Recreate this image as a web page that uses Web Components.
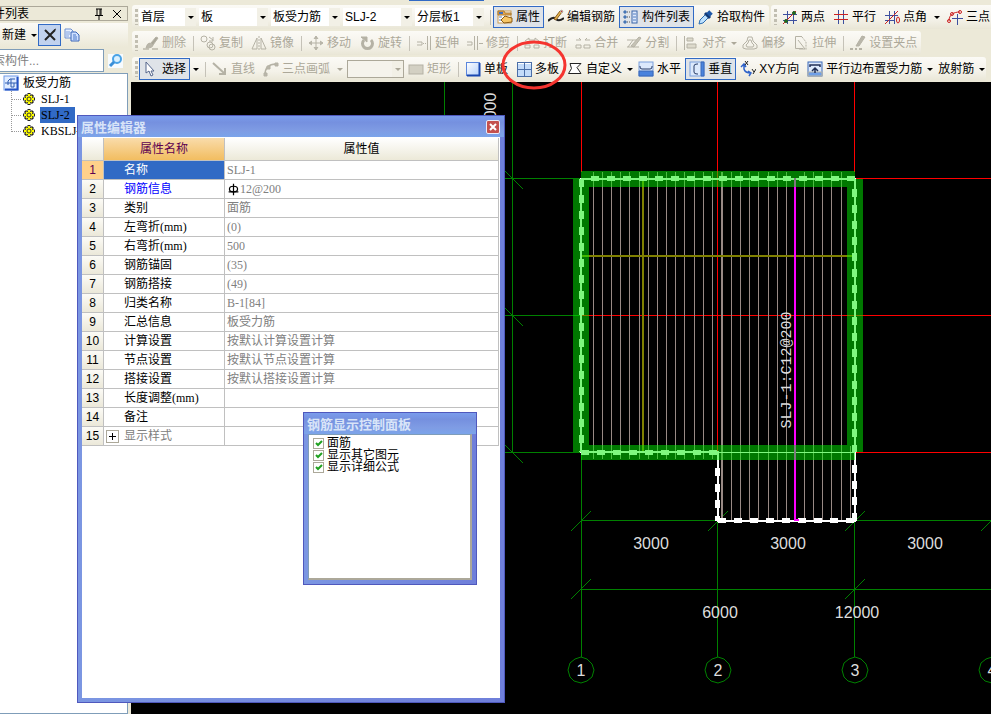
<!DOCTYPE html>
<html lang="zh-CN">
<head>
<meta charset="utf-8">
<title>板受力筋</title>
<style>
html, body {
  height: 100%;
}
body {
  margin: 0;
  overflow: hidden;
  background: #ece9d8;
  color: #000;
  font: 12px/16px "Liberation Sans", "Noto Sans CJK SC", sans-serif;
}
</style>
</head>
<body>
<rebar-app></rebar-app>

<script>
const icons = {
  clear: '<path d="M3 3l10 10M13 3L3 13" stroke="#222" stroke-width="2"/><path d="M12 3l2-1" stroke="#222"/>',
  copies: '<path d="M1 2h6l2 2v7H1z" fill="#e8f0ff" stroke="#6d8fd0"/><path d="M2 5h4M2 7h4M2 9h3" stroke="#7fa0dd"/><path d="M7 5h5l3 3v6H7z" fill="#cfe0ff" stroke="#3b66b8"/><path d="M9 8h3M9 10h4M9 12h4" stroke="#4a78c8"/>',
  search: '<rect x="0" y="1" width="15" height="14" fill="#f6fbff" stroke="none"/><circle cx="9" cy="6" r="4" fill="#d9f0ff" stroke="#4aa3e6" stroke-width="2"/><path d="M6 9l-4 4" stroke="#3a8fd8" stroke-width="3"/>',
  slab: '<rect x="1" y="1" width="14" height="14" fill="#e0ecff" stroke="#6f9ae8"/><path d="M14.500 2v12.500H2" stroke="#2452c4" stroke-width="2"/><path d="M2 8h4M5 10V6l2-2h5M8 4v8h3V8h3M6 8h5" stroke="#2f5cb0"/>',
  gear: '<path d="M8 2v12M2 8h12M4 4l8 8M12 4l-8 8" stroke="#222" stroke-width="3"/><path d="M8 3v10M3 8h10M5 5l6 6M11 5l-6 6" stroke="#ff0" stroke-width="2"/><circle cx="8" cy="8" r="3" fill="#ff0" stroke="#ff0"/><circle cx="8" cy="8" r="2" stroke="#333"/>',
  props: '<rect x="1" y="2" width="13" height="12" fill="#fff" stroke="#c99a4f"/><path d="M1 2h6l1 2h6v2H1z" fill="#e9a64a" stroke="#a87a35"/><path d="M2 4h4" stroke="#3f6fc0" stroke-width="2"/><path d="M2 8h3M2 11h3" stroke="#5b84c4"/><path d="M4 11l4-4 3 1 4 1v4l-8 1z" fill="#f6c667" stroke="#8b5a14"/>',
  edit: '<path d="M0 12q5-5 8-2t8-1" stroke="#222" stroke-width="2"/><path d="M6 10l6-8 2 1-6 8z" fill="#e5b44d" stroke="#8a5b1c"/><path d="M12 2l1-1 2 1-1 2z" fill="#c33"/>',
  list: '<path d="M1 2h2v2H1zM1 7h2v2H1zM1 12h2v2H1z" fill="#7fa3dc" stroke="#36a"/><path d="M4 3h4M4 8h4M4 13h4" stroke="#555" stroke-dasharray="1 1"/><rect x="9" y="2" width="5" height="12" fill="#dfe9fb" stroke="#3a66a8"/><path d="M10 5h3M10 8h3M10 11h3" stroke="#4d7cc0"/>',
  pick: '<path d="M1 15l1-4 6-6 3 3-6 6z" fill="#bfe2ff" stroke="#2b6cb0"/><path d="M7 4l5 5" stroke="#133a75" stroke-width="3"/><path d="M10 6l3-3" stroke="#1e58a8" stroke-width="5"/>',
  twopt: '<path d="M5.500 2v13M11.500 2v13M1 5.500h14M1 11.500h14" stroke="#3d4f9f"/><path d="M1 15L14 2" stroke="#c22"/><circle cx="4" cy="12" r="1.500" fill="#262" stroke="#262"/><circle cx="12" cy="4" r="1.500" fill="#262" stroke="#262"/>',
  parallel: '<path d="M5.500 1v14M10.500 1v14" stroke="#3d4f9f"/><path d="M1 5.500h14M1 10.500h14" stroke="#c22"/>',
  ptangle: '<path d="M5.500 2v13M10.500 2v13M1 6.500h13M1 11.500h10" stroke="#3d4f9f"/><path d="M1 15L14 2" stroke="#c22"/><ellipse cx="14" cy="11" rx="1.500" ry="3" stroke="#c22"/>',
  threept: '<path d="M2 12C2 6 6 3 13 3" stroke="#c22"/><circle cx="2" cy="12" r="1.500" stroke="#c22"/><circle cx="5" cy="5" r="1.500" stroke="#c22"/><circle cx="13" cy="3" r="1.500" stroke="#c22"/><path d="M5 9.500h11M10.500 5v11" stroke="#3d4f9f"/>',
  brush: '<path d="M0 14h6M9 14h6" stroke="#c8c5b8" stroke-width="2"/><path d="M3 13q1-5 4-5l3 2q0 3-7 3z" fill="#b9b6aa"/><path d="M8 8l5-6 2 1-5 7z" fill="#a9a699"/>',
  copy: '<circle cx="4" cy="4" r="3"/><circle cx="12" cy="12" r="3"/><circle cx="10" cy="10" r="3"/><path d="M9 2l4 3M13 2v4H9"/>',
  mirror: '<path d="M6 3v11H1zM10 3v11h5z"/><path d="M8 1v14" stroke-dasharray="2 1"/>',
  move: '<path d="M8 2v12M2 8h12"/><path d="M6 4l2-3 2 3M6 12l2 3 2-3M4 6L1 8l3 2M12 6l3 2-3 2" fill="#b9b6aa"/>',
  rotate: '<path d="M5 5a5 5 0 1 0 7 0" stroke-width="3"/><path d="M2 2h6v5z" fill="#b5b2a5"/>',
  extend: '<path d="M1 7h5v3H1M11.500 1v14M14.500 1v14"/><path d="M7 8.500h4" stroke-dasharray="1 1"/>',
  trim: '<path d="M0 7h5v3H0M7.500 1v14M10.500 1v14M12 8.500h4"/>',
  split: '<path d="M1 13h5v-3H1zM10 13h5v-3h-5zM1 6l4-3v2h3M15 6l-4-3v2H8"/>',
  merge: '<path d="M1 13h5v-3H1zM9 13h6v-3H9zM1 5h5L4 3M15 5h-5l2-2"/>',
  divide: '<path d="M1 5h10M1 12h12M2 12l5-7"/><path d="M5 11l8-9 2 1-7 9z" fill="#c5c2b5"/>',
  align: '<path d="M1.500 1v14"/><path d="M4 3h6v3H4zM4 9h9v4H4z" fill="#dddacc"/>',
  offset: '<path d="M6 2h4l1 4 4 4v3l-3 1H4l-3-1v-3l4-4z"/><path d="M7 5h2l1 3 2 2-1 2H5l-1-2 2-2z"/>',
  stretch: '<path d="M9 1.500H2.500v12H10M5 5l7 9H6"/><path d="M9 2l4 5v8" stroke-dasharray="2 1"/>',
  grip: '<path d="M0 14h3M5 14h2M9 14h3" stroke-width="2"/><path d="M6 11l6-10 3 1-6 9z" fill="#b9b6aa"/>',
  cursor: '<path d="M3 1v11l3-2 2 5 2-1-2-4h3z" fill="#fff" stroke="#55668c"/>',
  line: '<path d="M1 2l11 10M13 7v6H7" stroke-width="2"/>',
  arc: '<path d="M2 14C2 7 5 3 13 3" stroke-width="1.500"/><path d="M1 12h3v3H1zM4 5h3v3H4zM12 2h3v3h-3z" fill="#b9b6aa"/>',
  rect: '<rect x="1" y="4" width="14" height="9" fill="#d3d0c3"/>',
  single: '<defs><linearGradient id="s" x2="1" y2="1"><stop stop-color="#fff"/><stop offset="1" stop-color="#b4d0fa"/></linearGradient></defs><rect x="1.500" y="1.500" width="13" height="13" fill="url(#s)" stroke="#5b86dc"/><path d="M14.500 2v12.500H2" stroke="#1947b0" stroke-width="2"/>',
  multi: '<rect x="1.500" y="1.500" width="14" height="14" fill="#c4dcfa" stroke="#4a6ea8"/><path d="M8.500 1v15M1 8.500h15" stroke="#4a6ea8"/><path d="M2 2.500h6M9 2.500h6" stroke="#fff"/>',
  custom: '<path d="M3 2.500h11l-4 4 4 6H1.500l3-5z" fill="#fff" stroke="#222"/>',
  horiz: '<rect x="1" y="1" width="14" height="14" fill="#dce9fc" stroke="#7b9fdc"/><path d="M1 10h14v5H1z" fill="#4a83dd" stroke="#3a68b8"/><path d="M2 5v1q0 2 2 2h8q2 0 2-2V5" stroke="#273b66"/>',
  vert: '<rect x="1" y="1" width="14" height="14" fill="#dce9fc" stroke="#7b9fdc"/><path d="M12 1h3v14h-3z" fill="#4a83dd" stroke="#3a68b8"/><path d="M9 3H8Q5 3 5 5v6q0 2 3 2h1" stroke="#273b66"/>',
  xy: '<path d="M4 3v5q1 4 7 4M1 6l3-3 2 3M8 10l3 2-2 3" stroke="#2e62c9" stroke-width="1.500"/><path d="M5 0l3 4M8 0L5 4M12 8l2 3M16 8l-3 5" stroke="#222"/>',
  edge: '<rect x="1" y="1" width="14" height="14" fill="#dce9fc" stroke="#3a68b8"/><path d="M1 11h14v4H1z" fill="#6f9fe8"/><path d="M3 6V4h10v2M8 12V8M5 10l3-3 3 3" stroke="#1f2e55" stroke-width="1.500"/>',
  rebar: '<path d="M8 1v14M2 11h12" stroke="#000" stroke-width="1.500"/><ellipse cx="8" cy="7.500" rx="5" ry="3.500" stroke="#000" stroke-width="1.500"/>',
  pin: '<path d="M5 3h6M6 3v6M9 3v6M10 3v6M4 9.500h8M8 10v4" stroke="#000"/>',
  close: '<path d="M4 4l8 8M12 4l-8 8" stroke="#000"/>',
}

class ShadowElement extends HTMLElement {
  constructor() {
    super()

    const template = document.createElement('template')
    template.innerHTML = this.constructor.markup
    this.attachShadow({ mode: 'open' })
    this.shadowRoot.append(template.content.cloneNode(true))
  }

  $(selector) {
    return this.shadowRoot.querySelector(selector)
  }
}

class UiIcon extends ShadowElement {
  static observedAttributes = ['name']

  static markup = `
<style>
:host {
  display: block;
  flex: none;
  width: 16px;
  height: 16px;
}
svg {
  display: block;
  width: 100%;
  height: 100%;
}
</style>
<svg viewBox="0 0 16 16" fill="none" stroke="#b5b2a5" aria-hidden="true"></svg>
`

  attributeChangedCallback() {
    this.$('svg').innerHTML = icons[this.getAttribute('name')] || ''
  }
}
customElements.define('ui-icon', UiIcon)

class ToolBar extends ShadowElement {
  static markup = `
<style>
:host {
  display: flex;
  flex: none;
  align-items: center;
  height: 24px;
  border-radius: 3px;
  background: linear-gradient(#fbfaf6, #f4f2e9 60%, #e9e6d6);
}
.grip {
  width: 3px;
  height: 16px;
  margin: 0 1px 0 3px;
  background: repeating-linear-gradient(#c1beb1 0 3px, transparent 3px 5px);
}
</style>
<span class="grip"></span>
<slot></slot>
`
}
customElements.define('tool-bar', ToolBar)

class ToolSeparator extends ShadowElement {
  static markup = `
<style>
:host {
  flex: none;
  width: 1px;
  height: 15px;
  margin: 0 2px 0 3px;
  background: #c5c2b8;
}
</style>
`
}
customElements.define('tool-separator', ToolSeparator)

class ToolButton extends ShadowElement {
  static markup = `
<style>
:host {
  display: flex;
  flex: none;
  align-items: center;
}
button {
  display: flex;
  align-items: center;
  gap: 3px;
  height: 22px;
  box-sizing: border-box;
  padding: 0 3px;
  border: 1px solid transparent;
  background: none;
  color: inherit;
  font: inherit;
  white-space: nowrap;
}
:host([active]) button {
  border-color: #316ac5;
  background: #dfe3e8;
}
:host([disabled]) {
  color: #aca899;
}
.arrow {
  display: none;
  width: 12px;
}
.arrow::before {
  content: "";
  display: block;
  width: 0;
  margin: 0 auto;
  border: 3px solid transparent;
  border-top-color: currentColor;
  border-bottom: 0;
}
:host([menu]) .arrow {
  display: block;
}
:host([menu=inline]) .arrow {
  width: 8px;
}
</style>
<button type="button"><ui-icon></ui-icon><slot></slot></button>
<span class="arrow"></span>
`

  connectedCallback() {
    const icon = this.getAttribute('icon')

    if (icon) this.$('ui-icon').setAttribute('name', icon)
    else this.$('ui-icon').remove()
    this.$('button').disabled = this.hasAttribute('disabled')
  }
}
customElements.define('tool-button', ToolButton)

class ToolCombo extends ShadowElement {
  static markup = `
<style>
:host {
  display: grid;
  flex: none;
  width: 69px;
  height: 18px;
  margin-right: 3px;
  background: #fff;
}
:host([short]) {
  width: 57px;
}
select, .arrow {
  grid-area: 1 / 1;
}
select {
  appearance: none;
  width: 100%;
  padding: 0 12px 0 2px;
  border: 0;
  background: none;
  color: inherit;
  font: inherit;
}
.arrow {
  justify-self: end;
  align-self: stretch;
  display: flex;
  align-items: center;
  width: 11px;
  background: #f2f0e6;
  pointer-events: none;
}
.arrow::before {
  content: "";
  margin: auto;
  border: 3px solid transparent;
  border-top-color: #000;
  border-bottom: 0;
}
:host([disabled]) {
  box-sizing: border-box;
  width: 57px;
  margin: 0 0 0 1px;
  border: 1px solid #aca899;
  background: #f5f3ec;
}
:host([disabled]) .arrow::before {
  border-top-color: #aca899;
}
</style>
<select><option></option></select>
<span class="arrow"></span>
`

  connectedCallback() {
    this.$('option').textContent = this.getAttribute('value')
    this.$('select').setAttribute('aria-label', this.getAttribute('label'))
    this.$('select').disabled = this.hasAttribute('disabled')
  }
}
customElements.define('tool-combo', ToolCombo)

class ComponentPanel extends ShadowElement {
  static markup = `
<style>
:host {
  display: flex;
  flex-direction: column;
  margin-left: -8px;
  padding-top: 6px;
  background: #ece9d8;
}
header {
  display: flex;
  align-items: center;
  height: 13px;
  border: 1px solid #aca899;
  margin-bottom: 2px;
}
h2 {
  flex: 1;
  margin: 0;
  font: inherit;
}
header button, .tools button {
  display: flex;
  padding: 0;
  border: 0;
  background: none;
}
header button {
  margin-right: 2px;
}
.tools {
  display: flex;
  align-items: center;
  height: 24px;
  padding-left: 6px;
  background: linear-gradient(#fbfaf6, #ece9d8);
}
.tools .clear {
  align-items: center;
  justify-content: center;
  width: 23px;
  height: 22px;
  box-sizing: border-box;
  border: 1px solid #316ac5;
  background: #c1d2ee;
  margin-right: 3px;
}
.search {
  display: flex;
  align-items: center;
  gap: 4px;
  margin: 2px 0 1px;
}
input {
  flex: 1;
  min-width: 0;
  height: 23px;
  box-sizing: border-box;
  padding: 0;
  border: 1px solid #7f9db9;
  background: #fff;
  font: inherit;
}
input::placeholder {
  color: #808080;
}
.search button {
  width: 20px;
  padding: 0;
  border: 0;
  background: none;
}
ul {
  margin: 0;
  padding: 0;
  list-style: none;
}
.tree {
  flex: 1;
  padding: 1px 0 0 10px;
  border: 1px solid #7f9db9;
  background: #fff;
  overflow: hidden;
}
.root, li li {
  display: flex;
  align-items: center;
  height: 16px;
}
.root {
  gap: 4px;
}
li ul {
  margin-left: 8px;
  height: 41px;
  border-left: 1px dotted #999;
}
li li {
  font-family: "Liberation Serif", serif;
}
li li::before {
  content: "";
  width: 9px;
  border-top: 1px dotted #999;
}
li li ui-icon {
  margin-right: 3px;
}
li li span {
  min-width: 33px;
  padding: 0 1px;
  white-space: nowrap;
}
.selected {
  background: #316ac5;
}
</style>
<header>
  <h2>件列表</h2>
  <button type="button" aria-label="pin"><ui-icon name="pin"></ui-icon></button>
  <button type="button" aria-label="close"><ui-icon name="close"></ui-icon></button>
</header>
<div class="tools">
  <tool-button menu="inline">新建</tool-button>
  <button class="clear" type="button" aria-label="delete"><ui-icon name="clear"></ui-icon></button>
  <button type="button" aria-label="copy"><ui-icon name="copies"></ui-icon></button>
</div>
<div class="search">
  <input type="text" placeholder="索构件..." aria-label="search">
  <button type="button" aria-label="search"><ui-icon name="search"></ui-icon></button>
</div>
<ul class="tree">
  <li>
    <div class="root"><ui-icon name="slab"></ui-icon><span>板受力筋</span></div>
    <ul>
      <li><ui-icon name="gear"></ui-icon><span>SLJ-1</span></li>
      <li><ui-icon name="gear"></ui-icon><span class="selected">SLJ-2</span></li>
      <li><ui-icon name="gear"></ui-icon><span>KBSLJ-</span></li>
    </ul>
  </li>
</ul>
`
}
customElements.define('component-panel', ComponentPanel)

class ToolWindow extends ShadowElement {
  static markup = `
<style>
:host {
  display: flex;
  flex-direction: column;
  box-sizing: border-box;
  padding: 0 4px 4px;
  border: 1px solid #4f58bd;
  background: linear-gradient(90deg, #7b96e2, #6f7fda);
}
header {
  display: flex;
  align-items: center;
  flex: none;
  height: 21px;
  margin: 0 -4px;
  padding: 0 4px 0 3px;
  background: linear-gradient(#7a9cec, #7590df 30%, #7f9ce4 70%, #7ba4ea);
}
h2 {
  flex: 1;
  margin: 0;
  color: #d8e4f8;
  font: bold 13px/16px "Noto Sans CJK SC", sans-serif;
}
button {
  display: none;
  width: 14px;
  height: 14px;
  padding: 0;
  border: 1px solid #e8ecfa;
  border-radius: 2px;
  background: #c4504e;
}
button svg {
  display: block;
}
:host([closable]) button {
  display: block;
}
.body {
  flex: 1;
  min-height: 0;
  overflow: hidden;
  background: #fff;
}
</style>
<header>
  <h2></h2>
  <button type="button" aria-label="close">
    <svg width="12" height="12" viewBox="0 0 12 12" stroke="#fff" stroke-width="2"><path d="M3 3l6 6M9 3l-6 6"/></svg>
  </button>
</header>
<div class="body"><slot></slot></div>
`

  connectedCallback() {
    this.$('h2').textContent = this.getAttribute('caption')
  }
}
customElements.define('tool-window', ToolWindow)

const properties = [
  ['名称', 'SLJ-1'],
  ['钢筋信息', '12@200'],
  ['类别', '面筋'],
  ['左弯折(mm)', '(0)'],
  ['右弯折(mm)', '500'],
  ['钢筋锚固', '(35)'],
  ['钢筋搭接', '(49)'],
  ['归类名称', 'B-1[84]'],
  ['汇总信息', '板受力筋'],
  ['计算设置', '按默认计算设置计算'],
  ['节点设置', '按默认节点设置计算'],
  ['搭接设置', '按默认搭接设置计算'],
  ['长度调整(mm)', ''],
  ['备注', ''],
  ['显示样式', ''],
]

class PropertyGrid extends ShadowElement {
  static markup = `
<style>
:host {
  display: block;
  padding: 1px 1px 0 0;
  font-family: "Liberation Serif", "Noto Sans CJK SC", serif;
}
table {
  width: 100%;
  border-collapse: separate;
  border-spacing: 0;
  table-layout: fixed;
}
.no {
  width: 22px;
}
.name {
  width: 121px;
}
th, td {
  height: 19px;
  box-sizing: border-box;
  padding: 0;
  border: solid #c0c0c0;
  border-width: 0 1px 1px 0;
  font-weight: normal;
}
thead th {
  height: 23px;
  background: linear-gradient(#fff, #ece9d8);
}
thead .name {
  background: linear-gradient(#f9dcab, #f2bd60);
  color: #5c0050;
}
tbody th {
  background: linear-gradient(#fcfbf6, #ebe8d9);
  font-family: "Liberation Sans", sans-serif;
}
tbody td div {
  display: flex;
  align-items: center;
  height: 18px;
  line-height: 18px;
}
td + td div {
  padding-left: 2px;
  color: #808080;
}
.lead {
  display: flex;
  width: 18px;
  padding-left: 2px;
}
button {
  width: 13px;
  height: 13px;
  padding: 0;
  border: 1px solid #aca899;
  background: #fff;
}
button svg {
  display: block;
}
.current th {
  background: #ffd08a;
  color: #5c0050;
}
.current td:nth-child(2) {
  background: #316ac5;
  color: #fff;
}
.key td:nth-child(2) {
  color: #00f;
}
.group td {
  color: #808080;
}
td ui-icon {
  width: 13px;
  height: 13px;
}
</style>
<table>
  <thead>
    <tr><th class="no"></th><th class="name">属性名称</th><th>属性值</th></tr>
  </thead>
  <tbody></tbody>
</table>
`

  connectedCallback() {
    const classes = { 0: 'current', 1: 'key', 14: 'group' }
    const expander = `<button type="button" aria-label="expand">
<svg width="11" height="11" viewBox="0 0 11 11" stroke="#000"><path d="M2 5.500h7M5.500 2v7"/></svg></button>`

    this.$('tbody').innerHTML = properties.map(([name, value], i) => `
<tr class="${classes[i] || ''}">
  <th>${i + 1}</th>
  <td><div><span class="lead">${i === 14 ? expander : ''}</span>${name}</div></td>
  <td><div>${i === 1 ? '<ui-icon name="rebar"></ui-icon>' : ''}${value}</div></td>
</tr>`).join('')
  }
}
customElements.define('property-grid', PropertyGrid)

class DisplayOptions extends ShadowElement {
  static markup = `
<style>
:host {
  display: block;
  height: 100%;
  box-sizing: border-box;
  padding: 2px 4px;
  border: solid #7f9db9;
  border-width: 1px 2px 2px 1px;
  border-right-color: #aca899;
  border-bottom-color: #aca899;
  line-height: 12px;
}
label {
  display: flex;
  align-items: center;
  gap: 3px;
  height: 12px;
}
input {
  appearance: none;
  width: 11px;
  height: 11px;
  box-sizing: border-box;
  margin: 0;
  border: 1px solid #aca899;
  background: #fff;
}
.box {
  display: grid;
}
.box > * {
  grid-area: 1 / 1;
}
svg {
  pointer-events: none;
}
input:not(:checked) + svg {
  display: none;
}
</style>
`

  connectedCallback() {
    for (const text of ['面筋', '显示其它图元', '显示详细公式']) {
      const label = document.createElement('label')
      label.innerHTML = `<span class="box"><input type="checkbox" checked>
<svg width="11" height="11" viewBox="0 0 11 11" fill="none" stroke="#21a121" stroke-width="2"><path d="M3 5l2 2 4-4"/></svg></span><span>${text}</span>`
      this.shadowRoot.append(label)
    }
  }
}
customElements.define('display-options', DisplayOptions)

const bars = [
  593, 602, 611, 620, 629, 639, 648, 657, 666, 675, 684, 694, 703, 712,
  731, 740, 749, 758, 768, 777, 786, 804, 813, 822, 831, 841,
]

class CadView extends ShadowElement {
  static markup = `
<style>
:host {
  display: block;
  background: #000;
  overflow: hidden;
}
svg {
  display: block;
  width: 100%;
  height: 100%;
}
.crisp {
  shape-rendering: crispEdges;
}
text {
  fill: #ddd;
  stroke: none;
  font: 16px "Liberation Sans", sans-serif;
  text-anchor: middle;
}
.tag {
  font: 15px "Liberation Mono", monospace;
}
</style>
<svg>
  <g transform="translate(-131 -82)" fill="none">
    <g stroke="#008000">
      <path class="crisp" d="M444.500 82v40M512.500 82v370M505 178.500h76M505 315.500h76M505 452.500h76M581.500 452v205M717.500 520v137M854.500 520v137M581 520.500h600M581 589.500h600"/>
      <path d="M505 171l18 18M505 308l18 18M505 445l18 18M571 531l20-20M708 531l20-20M845 531l20-20M981 531l20-20M571 599l20-20M845 599l20-20"/>
      <g id="axes"></g>
    </g>
    <path class="crisp" stroke="#f00" d="M581.500 82v90M717.500 82v370M854.500 82v90M855 178.500h400M581 315.500h700M855 452.500h400"/>
    <g class="crisp">
      <path id="bars" stroke="#998a85"/>
      <path stroke="#998a85" stroke-width="2" d="M722 172v348"/>
      <path stroke="#808000" stroke-width="2" d="M643 178v274M581 256h274"/>
      <path stroke="#fff" d="M717 452.500h138"/>
      <path stroke="#fff" stroke-width="2" d="M581 179H855V521H718V452H581z"/>
      <path stroke="#fff" stroke-width="5" stroke-dasharray="8 8" d="M591 178.500H855M581.500 179V452M854.500 189V452M854.500 465V521M718 520.500H855M717.500 468V521M581 452.500H718"/>
      <path stroke="#f0f" stroke-width="2" d="M795 178v343M796 520h3"/>
    </g>
    <g class="crisp" fill="#00f000" opacity=".5">
      <path d="M581 171h274v8h8v273h-8v8H581v-8h-8V179h8zM589 187v258h258V187z" fill-rule="evenodd"/>
    </g>
    <text class="tag" transform="translate(791 370) rotate(-90)">SLJ-1:C12@200</text>
    <text transform="translate(496 106) rotate(-90)">000</text>
    <text x="651" y="549">3000</text>
    <text x="788" y="549">3000</text>
    <text x="925" y="549">3000</text>
    <text x="720" y="618">6000</text>
    <text x="857" y="618">12000</text>
  </g>
</svg>
`

  connectedCallback() {
    this.$('#bars').setAttribute('d', bars.map(x =>
      `M${x + 0.5} 172V${x < 717 ? 459 : 520}`).join('') + 'M850.5 446V520')

    const points = Array.from({ length: 12 }, (_, i) => {
      const angle = i * Math.PI / 6
      return `${Math.round(13 * Math.sin(angle))},${Math.round(13 * Math.cos(angle))}`
    }).join(' ')

    this.$('#axes').innerHTML = [581, 718, 855, 992].map((x, i) => `
<g transform="translate(${x} 670)"><polygon points="${points}"/><text y="6">${i + 1}</text></g>`).join('')
  }
}
customElements.define('cad-view', CadView)

class RebarApp extends ShadowElement {
  static markup = `
<style>
:host {
  position: relative;
  display: grid;
  grid-template-columns: 128px 1fr;
  column-gap: 3px;
  height: 100vh;
  overflow: hidden;
}
main {
  display: flex;
  flex-direction: column;
  min-width: 0;
}
nav {
  display: flex;
  flex-direction: column;
  gap: 2px;
  padding: 5px 0 1px 1px;
  overflow: hidden;
  background: linear-gradient(#316ac5, #316ac5) 278px 0 / 75px 1px no-repeat;
}
.row {
  display: flex;
  gap: 2px;
}
cad-view {
  flex: 1;
  min-height: 0;
}
.properties, .display, .mark {
  position: absolute;
}
.properties {
  left: 77px;
  top: 115px;
  bottom: 11px;
  width: 428px;
}
.display {
  left: 303px;
  top: 412px;
  width: 174px;
  height: 173px;
}
.mark {
  left: 500px;
  top: 39px;
  pointer-events: none;
}
</style>
<component-panel></component-panel>
<main>
  <nav>
    <div class="row">
      <tool-bar>
        <tool-combo short value="首层" label="楼层"></tool-combo>
        <tool-combo value="板" label="类别"></tool-combo>
        <tool-combo value="板受力筋" label="类型"></tool-combo>
        <tool-combo value="SLJ-2" label="构件"></tool-combo>
        <tool-combo value="分层板1" label="分层"></tool-combo>
        <tool-separator></tool-separator>
        <tool-button icon="props" active>属性</tool-button>
        <tool-button icon="edit">编辑钢筋</tool-button>
        <tool-button icon="list" active>构件列表</tool-button>
        <tool-button icon="pick">拾取构件</tool-button>
      </tool-bar>
      <tool-bar>
        <tool-button icon="twopt">两点</tool-button>
        <tool-button icon="parallel">平行</tool-button>
        <tool-button icon="ptangle" menu="split">点角</tool-button>
        <tool-button icon="threept">三点</tool-button>
      </tool-bar>
    </div>
    <div class="row">
      <tool-bar>
        <tool-button icon="brush" disabled>删除</tool-button>
        <tool-separator></tool-separator>
        <tool-button icon="copy" disabled>复制</tool-button>
        <tool-button icon="mirror" disabled>镜像</tool-button>
        <tool-separator></tool-separator>
        <tool-button icon="move" disabled>移动</tool-button>
        <tool-button icon="rotate" disabled>旋转</tool-button>
        <tool-separator></tool-separator>
        <tool-button icon="extend" disabled>延伸</tool-button>
        <tool-button icon="trim" disabled>修剪</tool-button>
        <tool-separator></tool-separator>
        <tool-button icon="split" disabled>打断</tool-button>
        <tool-button icon="merge" disabled>合并</tool-button>
        <tool-button icon="divide" disabled>分割</tool-button>
        <tool-separator></tool-separator>
        <tool-button icon="align" menu="inline" disabled>对齐</tool-button>
        <tool-button icon="offset" disabled>偏移</tool-button>
        <tool-button icon="stretch" disabled>拉伸</tool-button>
        <tool-separator></tool-separator>
        <tool-button icon="grip" disabled>设置夹点</tool-button>
      </tool-bar>
    </div>
    <div class="row">
      <tool-bar>
        <tool-button icon="cursor" menu="split" active>选择</tool-button>
        <tool-separator></tool-separator>
        <tool-button icon="line" disabled>直线</tool-button>
        <tool-button icon="arc" menu="split" disabled>三点画弧</tool-button>
        <tool-combo value="" label="画弧方式" disabled></tool-combo>
        <tool-button icon="rect" disabled>矩形</tool-button>
        <tool-separator></tool-separator>
        <tool-button icon="single">单板</tool-button>
        <tool-button icon="multi">多板</tool-button>
        <tool-button icon="custom" menu="inline">自定义</tool-button>
        <tool-button icon="horiz">水平</tool-button>
        <tool-button icon="vert" active>垂直</tool-button>
        <tool-button icon="xy">XY方向</tool-button>
        <tool-button icon="edge" menu="inline">平行边布置受力筋</tool-button>
        <tool-button menu="inline">放射筋</tool-button>
      </tool-bar>
    </div>
  </nav>
  <cad-view></cad-view>
</main>
<tool-window class="properties" caption="属性编辑器" closable>
  <property-grid></property-grid>
</tool-window>
<tool-window class="display" caption="钢筋显示控制面板">
  <display-options></display-options>
</tool-window>
<svg class="mark" width="68" height="52" fill="none" stroke="#f5342f" stroke-width="3" aria-hidden="true">
  <ellipse cx="34" cy="26" rx="31" ry="23"/>
</svg>
`
}
customElements.define('rebar-app', RebarApp)
</script>
</body>
</html>
